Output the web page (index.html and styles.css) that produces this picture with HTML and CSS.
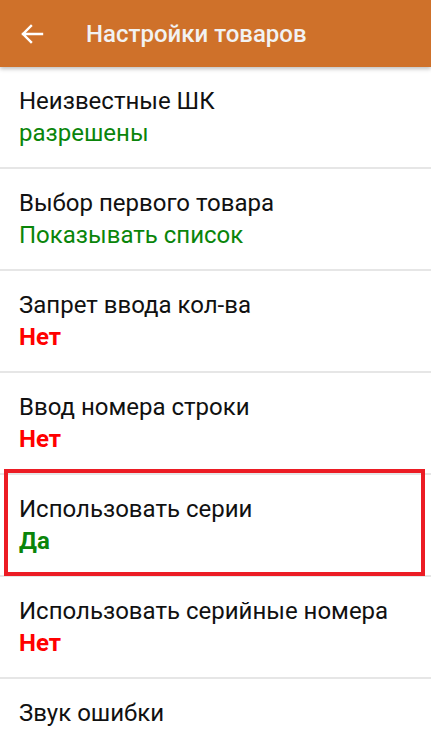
FILE: index.html
```html
<!DOCTYPE html>
<html lang="ru">
<head>
    <meta charset="UTF-8">
    <meta name="viewport" content="width=device-width, initial-scale=1">
    <title>Настройки товаров</title>
    <link rel="stylesheet" href="styles.css">
</head>
<body>
<div class="toolbar">
    <svg class="back_icon" width="24" height="20" viewBox="0 0 24 20">
        <path d="M22 10 H3 M11 2 L3 10 L11 18" fill="none" stroke="#ffffff" stroke-width="2.4" stroke-linecap="square"/>
    </svg>
    <span class="toolbar_title">Настройки товаров</span>
</div>

<div class="settings">
    <div class="setting">
        <div class="setting_name">Неизвестные ШК</div>
        <div class="setting_value green">разрешены</div>
    </div>
    <div class="setting">
        <div class="setting_name">Выбор первого товара</div>
        <div class="setting_value green">Показывать список</div>
    </div>
    <div class="setting">
        <div class="setting_name">Запрет ввода кол-ва</div>
        <div class="setting_value red bold">Нет</div>
    </div>
    <div class="setting">
        <div class="setting_name">Ввод номера строки</div>
        <div class="setting_value red bold">Нет</div>
    </div>
    <div class="setting highlighted">
        <div class="setting_name">Использовать серии</div>
        <div class="setting_value green bold">Да</div>
    </div>
    <div class="setting">
        <div class="setting_name">Использовать серийные номера</div>
        <div class="setting_value red bold">Нет</div>
    </div>
    <div class="setting last">
        <div class="setting_name">Звук ошибки</div>
    </div>
</div>
</body>
</html>
```

FILE: styles.css
```css
body {
    margin: 0;
    padding: 0;
    font-family: Roboto, "Noto Sans", sans-serif;
    background: #ffffff;
    height: 739px;
    overflow: hidden;
}

.toolbar {
    position: relative;
    z-index: 2;
    height: 67px;
    background: #cf712a;
    display: flex;
    align-items: center;
    box-shadow: 0 2px 4px rgba(0, 0, 0, 0.25);
}

.back_icon {
    margin-left: 20px;
    margin-top: 1px;
}

.toolbar_title {
    margin-left: 42px;
    color: #f2f2f2;
    font-size: 24px;
    font-weight: 500;
}

.setting {
    position: relative;
    padding: 18px 19px 18px 19px;
    border-bottom: 2px solid #e6e6e6;
}

.setting.last {
    border-bottom: 0;
    padding-bottom: 0;
}

.setting_name, .setting_value {
    font-size: 24px;
    line-height: 32px;
    white-space: nowrap;
}

.setting_name {
    color: #111111;
}

.green {
    color: #0a850a;
}

.red {
    color: #ff0000;
}

.bold {
    font-weight: bold;
}

.highlighted::after {
    content: "";
    position: absolute;
    top: -6px;
    left: 4px;
    right: 6px;
    bottom: -1px;
    border: 4px solid #ec1c24;
}
```
